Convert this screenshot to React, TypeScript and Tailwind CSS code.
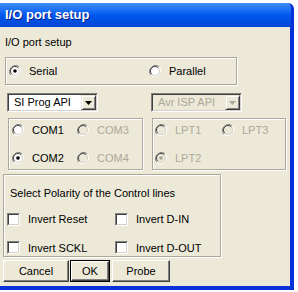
import React from "react";

function Radio({ checked = false, disabled = false }: { checked?: boolean; disabled?: boolean }) {
   return (
      <svg width="12" height="12" viewBox="0 0 12 12" className="shrink-0">
         <path d="M10.2 1.8 A6 6 0 0 0 1.8 10.2" fill="none" stroke="#808080" strokeWidth="1" />
         <path d="M1.8 10.2 A6 6 0 0 0 10.2 1.8" fill="none" stroke="#ffffff" strokeWidth="1" />
         <circle cx="6" cy="6" r="4.5" fill={disabled ? "#ece9d8" : "#ffffff"} />
         <path d="M9.2 2.8 A4.5 4.5 0 0 0 2.8 9.2" fill="none" stroke="#404040" strokeWidth="1" />
         <path d="M2.8 9.2 A4.5 4.5 0 0 0 9.2 2.8" fill="none" stroke="#d4d0c8" strokeWidth="1" />
         {checked && <circle cx="6" cy="6" r="1.8" fill={disabled ? "#aca899" : "#000000"} />}
      </svg>
   );
}

function Check() {
   return (
      <div className="w-[13px] h-[13px] shrink-0 border border-t-[#808080] border-l-[#808080] border-r-white border-b-white">
         <div className="w-full h-full bg-white border border-t-[#404040] border-l-[#404040] border-r-[#d4d0c8] border-b-[#d4d0c8]" />
      </div>
   );
}

function Combo({ label, disabled = false, className }: { label: string; disabled?: boolean; className: string }) {
   return (
      <div className={`h-[19px] border border-t-[#808080] border-l-[#808080] border-r-white border-b-white ${className}`}>
         <div
            className={`h-full flex items-center border border-t-[#404040] border-l-[#404040] border-r-[#d4d0c8] border-b-[#d4d0c8] ${
               disabled ? "bg-[#ece9d8] text-[#aca899]" : "bg-white text-black"
            }`}
         >
            <span className="flex-1 pl-[5px] leading-none">{label}</span>
            <div className="w-[15px] h-full bg-[#ece9d8] flex items-center justify-center border border-t-[#ece9d8] border-l-[#ece9d8] border-r-[#404040] border-b-[#404040] shadow-[inset_1px_1px_0_#fff,inset_-1px_-1px_0_#808080]">
               <svg width="7" height="4" viewBox="0 0 7 4">
                  <path d="M0 0 H7 L3.5 4 Z" fill={disabled ? "#aca899" : "#000"} />
               </svg>
            </div>
         </div>
      </div>
   );
}

function RadioItem({ label, checked, disabled, className }: { label: string; checked?: boolean; disabled?: boolean; className?: string }) {
   return (
      <div className={`flex items-center gap-[8px] ${className ?? ""}`}>
         <Radio checked={checked} disabled={disabled} />
         <span className={disabled ? "text-[#aca899]" : "text-black"}>{label}</span>
      </div>
   );
}

function CheckItem({ label, className }: { label: string; className?: string }) {
   return (
      <div className={`flex items-center gap-[8px] ${className ?? ""}`}>
         <Check />
         <span>{label}</span>
      </div>
   );
}

function Button({ label, isDefault = false, className }: { label: string; isDefault?: boolean; className: string }) {
   return (
      <div className={`h-[22px] ${isDefault ? "border border-black" : ""} ${className}`}>
         <div className="h-full flex items-center justify-center bg-[#ece9d8] border border-t-white border-l-white border-r-[#404040] border-b-[#404040] shadow-[inset_-1px_-1px_0_#808080]">
            {label}
         </div>
      </div>
   );
}

const group = "border border-[#aca899] shadow-[inset_1px_1px_0_#fff,1px_1px_0_#fff]";

export default function App() {
   return (
      <div
         className="w-[298px] h-[292px] bg-white pt-[3px] text-[11px] text-black"
         style={{ fontFamily: '"Liberation Sans", Arial, sans-serif' }}
      >
         <div className="w-[294px]">
            {/* title bar */}
            <div className="h-[24px] flex items-center pl-[5px] rounded-tr-[6px] bg-linear-to-b from-[#3d8df8] via-[#0058ee] to-[#0046d2] border-r-[3px] border-[#0831d9]">
               <span className="text-white font-bold text-[13px] [text-shadow:1px_1px_0_#0a1e8a]">I/O port setup</span>
            </div>

            {/* body */}
            <div className="h-[263px] bg-[#ece9d8] border-r-[4px] border-b-[4px] border-[#0831d9] flex flex-col">
               <div className="ml-[5px] mt-[8px] leading-[14px]">I/O port setup</div>

               <div className={`ml-[5px] mt-[8px] w-[232px] h-[28px] flex items-center ${group}`}>
                  <RadioItem label="Serial" checked className="ml-[3px] w-[140px]" />
                  <RadioItem label="Parallel" />
               </div>

               <div className="mt-[8px] flex">
                  <Combo label="SI Prog API" className="ml-[7px] w-[91px]" />
                  <Combo label="Avr ISP API" disabled className="ml-[53px] w-[91px]" />
               </div>

               <div className="mt-[6px] flex">
                  <div className={`ml-[8px] w-[135px] h-[52px] flex flex-col justify-center gap-[12px] ${group}`}>
                     <div className="flex">
                        <RadioItem label="COM1" className="ml-[3px] w-[65px]" />
                        <RadioItem label="COM3" disabled />
                     </div>
                     <div className="flex">
                        <RadioItem label="COM2" checked className="ml-[3px] w-[65px]" />
                        <RadioItem label="COM4" disabled />
                     </div>
                  </div>
                  <div className={`ml-[9px] w-[134px] h-[52px] flex flex-col justify-center gap-[12px] ${group}`}>
                     <div className="flex">
                        <RadioItem label="LPT1" disabled className="ml-[2px] w-[67px]" />
                        <RadioItem label="LPT3" disabled />
                     </div>
                     <RadioItem label="LPT2" checked disabled className="ml-[2px]" />
                  </div>
               </div>

               <div className={`ml-[3px] mt-[4px] w-[218px] h-[83px] flex flex-col ${group}`}>
                  <div className="ml-[6px] mt-[11px] leading-[14px]">Select Polarity of the Control lines</div>
                  <div className="mt-[11px] flex">
                     <CheckItem label="Invert Reset" className="ml-[3px] w-[108px]" />
                     <CheckItem label="Invert D-IN" />
                  </div>
                  <div className="mt-[12px] flex">
                     <CheckItem label="Invert SCKL" className="ml-[3px] w-[108px]" />
                     <CheckItem label="Invert D-OUT" />
                  </div>
               </div>

               <div className="mt-[3px] flex">
                  <Button label="Cancel" className="ml-[3px] w-[66px]" />
                  <Button label="OK" isDefault className="ml-[1px] w-[40px]" />
                  <Button label="Probe" className="ml-[2px] w-[58px]" />
               </div>
            </div>
         </div>
      </div>
   );
}
